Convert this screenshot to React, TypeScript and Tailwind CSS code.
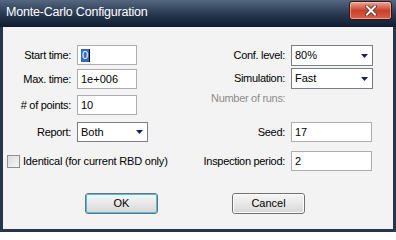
import React from 'react';

const font = "font-['Liberation_Sans',Arial,sans-serif]";

const SelectArrow: React.FC = () => (
  <svg width="7" height="4" viewBox="0 0 7 4" className="shrink-0">
    <path d="M0 0H7L3.5 4Z" fill="#14206b" />
  </svg>
);

const TextBox: React.FC<{ value: string; width: string; selected?: boolean }> = ({ value, width, selected }) => (
  <div className={`${width} h-[20px] bg-white border border-[#abadb3] flex items-center pl-[3px] text-[11px] text-black`}>
    {selected ? (
      <span className="flex items-center">
        <span className="bg-[#3168c6] text-white px-[1px] leading-[13px]">0</span>
        <span className="w-[1px] h-[13px] bg-black" />
      </span>
    ) : (
      value
    )}
  </div>
);

const DropDown: React.FC<{ value: string; width: string; height?: string }> = ({ value, width, height = 'h-[21px]' }) => (
  <div className={`${width} ${height} bg-white border border-[#7a7d84] flex items-center justify-between pl-[3px] pr-[4px] text-[11px] text-black`}>
    <span>{value}</span>
    <SelectArrow />
  </div>
);

const LeftRow: React.FC<{ label: string; className?: string; children: React.ReactNode }> = ({ label, className = '', children }) => (
  <div className={`flex items-center ${className}`}>
    <span className="w-[68px] text-right tracking-[-0.3px]">{label}</span>
    <div className="ml-[6px]">{children}</div>
  </div>
);

const RightRow: React.FC<{ label: string; className?: string; children: React.ReactNode }> = ({ label, className = '', children }) => (
  <div className={`flex items-center ${className}`}>
    <span className="w-[82px] text-right tracking-[-0.3px]">{label}</span>
    <div className="ml-[6px]">{children}</div>
  </div>
);

const DialogButton: React.FC<{ label: string; isDefault?: boolean }> = ({ label, isDefault }) => (
  <div className="w-[73px] h-[21px] rounded-[3px] border border-[#707070] bg-gradient-to-b from-[#f6f6f6] via-[#e8e8e8] to-[#d6d6d6] p-0">
    <div
      className={`w-full h-full rounded-[2px] flex items-center justify-center text-[11px] text-black ${
        isDefault ? 'border border-[#3dc3f0]' : 'border border-[#fcfcfc]'
      }`}
    >
      {label}
    </div>
  </div>
);

export default function App() {
  return (
    <div className={`w-[396px] h-[232px] bg-[#27364a] flex flex-col overflow-hidden ${font}`}>
      {/* title bar */}
      <div className="h-[27px] flex items-center justify-between pl-[6px] pr-[4px] bg-gradient-to-b from-[#566881] via-[#2a3a52] to-[#101c31]">
        <span className="text-white text-[12.5px] tracking-[-0.2px] -mt-[3px]">Monte-Carlo Configuration</span>
        <div className="w-[43px] h-[19px] -mt-[6px] rounded-[3px] border border-[#3a1410] bg-gradient-to-b from-[#eaa597] via-[#c8412a] to-[#d9604a] flex items-center justify-center shadow-[inset_0_0_0_1px_rgba(255,220,210,0.5)]">
          <svg width="12" height="11" viewBox="0 0 12 11">
            <path d="M2 1.5L10 9.5M10 1.5L2 9.5" stroke="#5a2a22" strokeWidth="3.6" strokeLinecap="square" />
            <path d="M2 1.5L10 9.5M10 1.5L2 9.5" stroke="#ffffff" strokeWidth="2" strokeLinecap="square" />
          </svg>
        </div>
      </div>

      {/* body */}
      <div className="flex-1 mx-[3px] mb-[3px] bg-[#f3f3f3] flex flex-col pt-[18px] text-[11px] text-black">
        <div className="flex">
          <div className="w-[200px] flex flex-col">
            <LeftRow label="Start time:">
              <TextBox value="0" width="w-[60px]" selected />
            </LeftRow>
            <LeftRow label="Max. time:" className="mt-[4px]">
              <TextBox value="1e+006" width="w-[60px]" />
            </LeftRow>
            <LeftRow label="# of points:" className="mt-[6px]">
              <TextBox value="10" width="w-[60px]" />
            </LeftRow>
            <LeftRow label="Report:" className="mt-[7px]">
              <DropDown value="Both" width="w-[71px]" height="h-[20px]" />
            </LeftRow>
            <div className="flex items-center mt-[11px] ml-[4px]">
              <div className="w-[13px] h-[13px] border border-[#8e8f8f] bg-gradient-to-br from-[#dcdcdc] to-[#f6f6f6]" />
              <span className="ml-[3px] tracking-[-0.2px]">Identical (for current RBD only)</span>
            </div>
          </div>

          <div className="flex flex-col">
            <RightRow label="Conf. level:">
              <DropDown value="80%" width="w-[82px]" />
            </RightRow>
            <RightRow label="Simulation:" className="mt-[2px]">
              <DropDown value="Fast" width="w-[82px]" />
            </RightRow>
            <div className="h-[14px] mt-[2px] pl-[8px] flex items-center text-[#8d8d8d] tracking-[-0.3px]">
              Number of runs:
            </div>
            <RightRow label="Seed:" className="mt-[17px]">
              <TextBox value="17" width="w-[81px]" />
            </RightRow>
            <RightRow label="Inspection period:" className="mt-[9px]">
              <TextBox value="2" width="w-[81px]" />
            </RightRow>
          </div>
        </div>

        <div className="flex mt-[22px] pl-[82px]">
          <DialogButton label="OK" isDefault />
          <div className="ml-[74px]">
            <DialogButton label="Cancel" />
          </div>
        </div>
      </div>
    </div>
  );
}
